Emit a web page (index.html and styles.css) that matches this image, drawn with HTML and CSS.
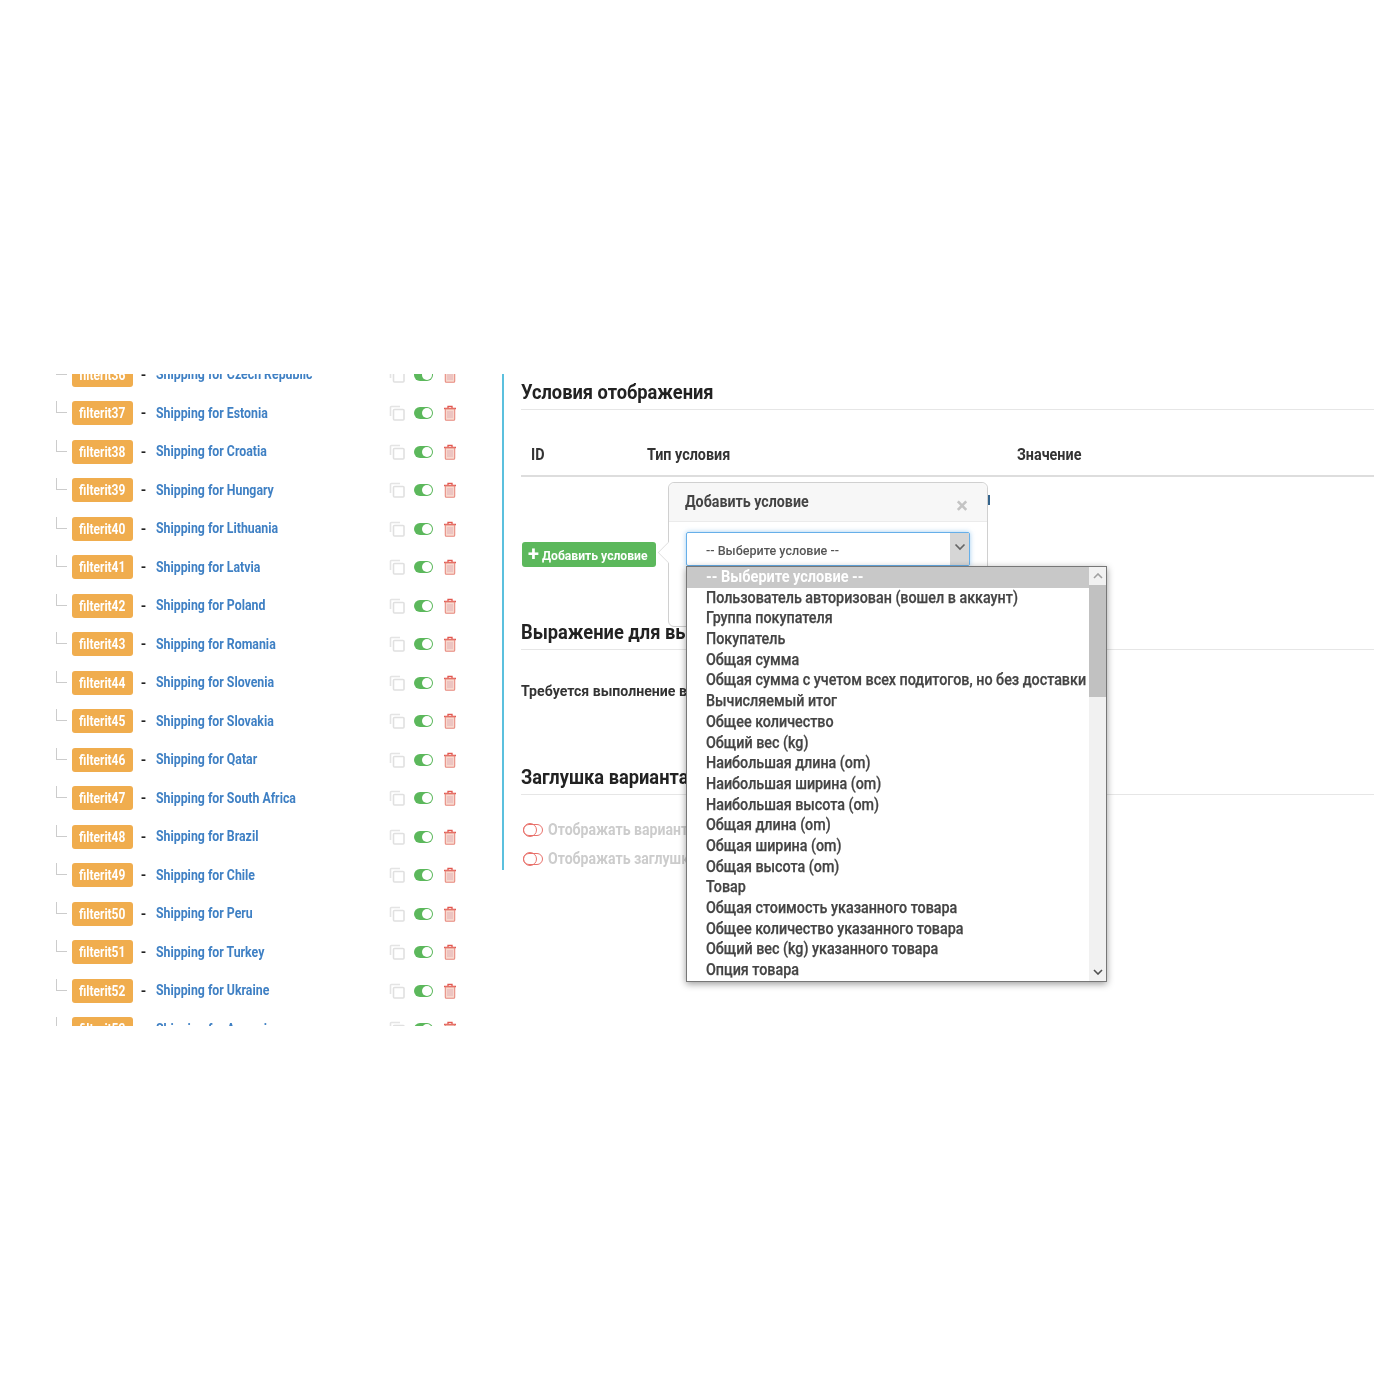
FILE: index.html
```html
<!DOCTYPE html>
<html lang="ru">
<head>
<meta charset="utf-8">
<title>Условия отображения</title>
<link rel="stylesheet" href="styles.css">
</head>
<body>
<svg class="defs" width="0" height="0" aria-hidden="true">
  <symbol id="copy" viewBox="0 0 16 16"><path d="M11 1.5H2.2a.7.7 0 0 0-.7.7V11" fill="none" stroke="#e4e4e4" stroke-width="1.6"/><rect x="4.5" y="4.5" width="10.5" height="10.5" rx="1" fill="#fff" stroke="#e0e0e0" stroke-width="1.6"/></symbol>
  <symbol id="trash" viewBox="0 0 14 16"><path d="M1 3.5h12M5 3.2V1.4h4v1.8" fill="none" stroke="#e2574f" stroke-width="1.3"/><path d="M2.3 4v10.3a1 1 0 0 0 1 1h7.4a1 1 0 0 0 1-1V4z" fill="#f7d8ce" stroke="#e88b80" stroke-width="1.1"/><path d="M5 6v7M7 6v7M9 6v7" stroke="#e3b0b4" stroke-width="1"/></symbol>
</svg>
<main class="shot">
  <section class="tree">
    <div class="row"><i class="elbow"></i><span class="badge"><span class="nar">filterit36</span></span><b class="dash">-</b><a class="link"><span class="nar">Shipping for Czech Republic</span></a><span class="acts"><svg class="ic-copy"><use href="#copy"/></svg><i class="tog"></i><svg class="ic-trash"><use href="#trash"/></svg></span></div>
    <div class="row"><i class="elbow"></i><span class="badge"><span class="nar">filterit37</span></span><b class="dash">-</b><a class="link"><span class="nar">Shipping for Estonia</span></a><span class="acts"><svg class="ic-copy"><use href="#copy"/></svg><i class="tog"></i><svg class="ic-trash"><use href="#trash"/></svg></span></div>
    <div class="row"><i class="elbow"></i><span class="badge"><span class="nar">filterit38</span></span><b class="dash">-</b><a class="link"><span class="nar">Shipping for Croatia</span></a><span class="acts"><svg class="ic-copy"><use href="#copy"/></svg><i class="tog"></i><svg class="ic-trash"><use href="#trash"/></svg></span></div>
    <div class="row"><i class="elbow"></i><span class="badge"><span class="nar">filterit39</span></span><b class="dash">-</b><a class="link"><span class="nar">Shipping for Hungary</span></a><span class="acts"><svg class="ic-copy"><use href="#copy"/></svg><i class="tog"></i><svg class="ic-trash"><use href="#trash"/></svg></span></div>
    <div class="row"><i class="elbow"></i><span class="badge"><span class="nar">filterit40</span></span><b class="dash">-</b><a class="link"><span class="nar">Shipping for Lithuania</span></a><span class="acts"><svg class="ic-copy"><use href="#copy"/></svg><i class="tog"></i><svg class="ic-trash"><use href="#trash"/></svg></span></div>
    <div class="row"><i class="elbow"></i><span class="badge"><span class="nar">filterit41</span></span><b class="dash">-</b><a class="link"><span class="nar">Shipping for Latvia</span></a><span class="acts"><svg class="ic-copy"><use href="#copy"/></svg><i class="tog"></i><svg class="ic-trash"><use href="#trash"/></svg></span></div>
    <div class="row"><i class="elbow"></i><span class="badge"><span class="nar">filterit42</span></span><b class="dash">-</b><a class="link"><span class="nar">Shipping for Poland</span></a><span class="acts"><svg class="ic-copy"><use href="#copy"/></svg><i class="tog"></i><svg class="ic-trash"><use href="#trash"/></svg></span></div>
    <div class="row"><i class="elbow"></i><span class="badge"><span class="nar">filterit43</span></span><b class="dash">-</b><a class="link"><span class="nar">Shipping for Romania</span></a><span class="acts"><svg class="ic-copy"><use href="#copy"/></svg><i class="tog"></i><svg class="ic-trash"><use href="#trash"/></svg></span></div>
    <div class="row"><i class="elbow"></i><span class="badge"><span class="nar">filterit44</span></span><b class="dash">-</b><a class="link"><span class="nar">Shipping for Slovenia</span></a><span class="acts"><svg class="ic-copy"><use href="#copy"/></svg><i class="tog"></i><svg class="ic-trash"><use href="#trash"/></svg></span></div>
    <div class="row"><i class="elbow"></i><span class="badge"><span class="nar">filterit45</span></span><b class="dash">-</b><a class="link"><span class="nar">Shipping for Slovakia</span></a><span class="acts"><svg class="ic-copy"><use href="#copy"/></svg><i class="tog"></i><svg class="ic-trash"><use href="#trash"/></svg></span></div>
    <div class="row"><i class="elbow"></i><span class="badge"><span class="nar">filterit46</span></span><b class="dash">-</b><a class="link"><span class="nar">Shipping for Qatar</span></a><span class="acts"><svg class="ic-copy"><use href="#copy"/></svg><i class="tog"></i><svg class="ic-trash"><use href="#trash"/></svg></span></div>
    <div class="row"><i class="elbow"></i><span class="badge"><span class="nar">filterit47</span></span><b class="dash">-</b><a class="link"><span class="nar">Shipping for South Africa</span></a><span class="acts"><svg class="ic-copy"><use href="#copy"/></svg><i class="tog"></i><svg class="ic-trash"><use href="#trash"/></svg></span></div>
    <div class="row"><i class="elbow"></i><span class="badge"><span class="nar">filterit48</span></span><b class="dash">-</b><a class="link"><span class="nar">Shipping for Brazil</span></a><span class="acts"><svg class="ic-copy"><use href="#copy"/></svg><i class="tog"></i><svg class="ic-trash"><use href="#trash"/></svg></span></div>
    <div class="row"><i class="elbow"></i><span class="badge"><span class="nar">filterit49</span></span><b class="dash">-</b><a class="link"><span class="nar">Shipping for Chile</span></a><span class="acts"><svg class="ic-copy"><use href="#copy"/></svg><i class="tog"></i><svg class="ic-trash"><use href="#trash"/></svg></span></div>
    <div class="row"><i class="elbow"></i><span class="badge"><span class="nar">filterit50</span></span><b class="dash">-</b><a class="link"><span class="nar">Shipping for Peru</span></a><span class="acts"><svg class="ic-copy"><use href="#copy"/></svg><i class="tog"></i><svg class="ic-trash"><use href="#trash"/></svg></span></div>
    <div class="row"><i class="elbow"></i><span class="badge"><span class="nar">filterit51</span></span><b class="dash">-</b><a class="link"><span class="nar">Shipping for Turkey</span></a><span class="acts"><svg class="ic-copy"><use href="#copy"/></svg><i class="tog"></i><svg class="ic-trash"><use href="#trash"/></svg></span></div>
    <div class="row"><i class="elbow"></i><span class="badge"><span class="nar">filterit52</span></span><b class="dash">-</b><a class="link"><span class="nar">Shipping for Ukraine</span></a><span class="acts"><svg class="ic-copy"><use href="#copy"/></svg><i class="tog"></i><svg class="ic-trash"><use href="#trash"/></svg></span></div>
    <div class="row"><i class="elbow"></i><span class="badge"><span class="nar">filterit53</span></span><b class="dash">-</b><a class="link"><span class="nar">Shipping for Armenia</span></a><span class="acts"><svg class="ic-copy"><use href="#copy"/></svg><i class="tog"></i><svg class="ic-trash"><use href="#trash"/></svg></span></div>
  </section>
  <section class="panel">
    <div class="rail">
      <h2 class="h h1"><span class="nar">Условия отображения</span></h2>
      <div class="thead"><span class="c-id"><span class="nar">ID</span></span><span class="c-type"><span class="nar">Тип условия</span></span><span><span class="nar">Значение</span></span></div>
      <div class="addrow"><button class="add"><span class="plus">+</span><span class="nar">Добавить условие</span></button></div>
      <h2 class="h h2"><span class="nar">Выражение для выбора вариантов</span></h2>
      <p class="need"><span class="nar">Требуется выполнение всех условий</span></p>
      <h2 class="h h3"><span class="nar">Заглушка варианта</span></h2>
      <div class="opts">
        <div class="opt"><i class="off"></i><span class="nar">Отображать вариант</span></div>
        <div class="opt"><i class="off"></i><span class="nar">Отображать заглушку</span></div>
      </div>
    </div>
    <div class="pop">
      <i class="pop-arrow"></i>
      <div class="pop-head"><span class="nar">Добавить условие</span><span class="close">×</span></div>
      <div class="pop-body">
        <div class="sel"><span class="nar">-- Выберите условие --</span><span class="sel-btn"><svg width="12" height="8" viewBox="0 0 12 8"><path d="M1.5 1.5 6 6l4.5-4.5" fill="none" stroke="#666" stroke-width="1.7"/></svg></span></div>
      </div>
    </div>
    <i class="pop-mark"></i>
    <div class="list">
      <ul class="items">
        <li class="on"><span class="nar">-- Выберите условие --</span></li>
        <li><span class="nar">Пользователь авторизован (вошел в аккаунт)</span></li>
        <li><span class="nar">Группа покупателя</span></li>
        <li><span class="nar">Покупатель</span></li>
        <li><span class="nar">Общая сумма</span></li>
        <li><span class="nar">Общая сумма с учетом всех подитогов, но без доставки</span></li>
        <li><span class="nar">Вычисляемый итог</span></li>
        <li><span class="nar">Общее количество</span></li>
        <li><span class="nar">Общий вес (kg)</span></li>
        <li><span class="nar">Наибольшая длина (om)</span></li>
        <li><span class="nar">Наибольшая ширина (om)</span></li>
        <li><span class="nar">Наибольшая высота (om)</span></li>
        <li><span class="nar">Общая длина (om)</span></li>
        <li><span class="nar">Общая ширина (om)</span></li>
        <li><span class="nar">Общая высота (om)</span></li>
        <li><span class="nar">Товар</span></li>
        <li><span class="nar">Общая стоимость указанного товара</span></li>
        <li><span class="nar">Общее количество указанного товара</span></li>
        <li><span class="nar">Общий вес (kg) указанного товара</span></li>
        <li><span class="nar">Опция товара</span></li>
      </ul>
      <div class="sb">
        <svg class="sb-a" viewBox="0 0 10 6"><path d="M1 5 5 1l4 4" fill="none" stroke="#a0a0a0" stroke-width="1.6"/></svg>
        <div class="thumb"></div>
        <svg class="sb-a sb-d" viewBox="0 0 10 6"><path d="M1 1l4 4 4-4" fill="none" stroke="#505050" stroke-width="1.6"/></svg>
      </div>
    </div>
  </section>
</main>
</body>
</html>
```
FILE: styles.css
```css
* { box-sizing: border-box; }
html, body { margin: 0; background: #fff; }
body { height: 1400px; font-family: Roboto, "Liberation Sans", sans-serif; color: #333; }
.defs { position: absolute; }
.shot { margin-top: 374px; height: 652px; display: flex; overflow: hidden; filter: blur(.35px); }
.nar { display: inline-block; white-space: nowrap; transform: scaleX(var(--sx, .85)); transform-origin: 0 50%; }

.tree { width: 502px; flex: none; padding: 0 0 0 56px; margin-top: -18.6px; }
.row { height: 38.53px; display: flex; align-items: center; position: relative; }
.elbow { width: 11px; height: 12px; margin: -12px 5px 0 0; border-left: 1px solid #ccc; border-bottom: 1px solid #ccc; flex: none; }
.badge { --sx: .856; width: 61px; height: 24px; flex: none; background: #f0ad4e; border-radius: 3px; color: #fff; font-size: 14px; font-weight: 700; line-height: 24px; padding-left: 7px; overflow: hidden; }
.dash { width: 21px; margin-right: 2px; flex: none; text-align: center; font-size: 14px; color: #222; }
.link { --sx: .85; color: #3f80c4; font-size: 14.5px; font-weight: 700; width: 233px; flex: none; }
.acts { display: flex; align-items: center; }
.ic-copy { width: 16px; height: 16px; }
.tog { width: 19px; height: 12px; margin-left: 9px; border-radius: 6px; background: #5cb85c; position: relative; }
.tog::after { content: ""; position: absolute; right: 1px; top: 1px; width: 10px; height: 10px; border-radius: 50%; background: #fff; }
.ic-trash { width: 14px; height: 16px; margin-left: 10px; }

.panel { flex: 1; min-width: 0; position: relative; }
.rail { width: 872px; height: 496px; border-left: 2px solid #5bc0de; padding-left: 17px; }
.h { --sx: .87; margin: 0; font-size: 21px; font-weight: 700; color: #222; border-bottom: 1px solid #e6e6e6; line-height: 24px; }
.h1 { padding-top: 6px; height: 36px; }
.thead { --sx: .87; display: flex; height: 67px; padding: 33px 0 0 10px; border-bottom: 2px solid #ddd; font-size: 16.5px; font-weight: 700; color: #333; line-height: 24px; }
.c-id { width: 116px; }
.c-type { width: 370px; }
.addrow { height: 140px; padding: 65px 0 0 1px; }
.add { --sx: .9; display: flex; align-items: center; width: 134px; height: 25px; padding: 0 0 0 6px; border: 0; border-radius: 3px; background: #5cb85c; color: #fff; font: 700 13.5px Roboto, sans-serif; overflow: hidden; }
.plus { font-size: 20px; line-height: 20px; margin-right: 3px; transform: translateY(-1px); }
.h2 { height: 33px; padding-top: 3px; }
.need { --sx: .91; margin: 0; padding-top: 30px; height: 112px; font-size: 15.5px; font-weight: 700; line-height: 22px; color: #333; }
.h3 { height: 33px; padding-top: 3px; }
.opts { --sx: .88; padding-top: 20px; }
.opt { height: 29px; display: flex; align-items: center; font-size: 16px; font-weight: 700; color: #ccc; margin-left: 2px; }
.off { width: 20px; height: 12px; margin-right: 5px; border: 1.5px solid #e8716b; border-radius: 6px; position: relative; flex: none; }
.off::after { content: ""; position: absolute; left: -1.5px; top: -1.5px; width: 12px; height: 12px; border-radius: 50%; border: 1.5px solid #e8716b; }

.pop { position: absolute; left: 166px; top: 108px; width: 320px; height: 145px; background: #fff; border: 1px solid #d0d0d0; border-radius: 6px; }
.pop-arrow { position: absolute; left: -11px; top: 59px; width: 21px; height: 21px; background: #fff; border-left: 1px solid #ddd; border-bottom: 1px solid #ddd; transform: rotate(45deg) scale(.72); }
.pop-head { --sx: .89; position: relative; height: 39px; padding: 8px 0 0 16px; background: #f7f7f7; border-bottom: 1px solid #ebebeb; border-radius: 6px 6px 0 0; font-size: 16px; font-weight: 700; color: #444; line-height: 22px; }
.close { position: absolute; right: 19px; top: 10px; font-size: 22px; font-weight: 700; line-height: 26px; color: #c4c4c4; }
.pop-body { padding: 10px 18px 10px 17px; }
.sel { --sx: .93; position: relative; width: 284px; height: 34px; border: 1px solid #66afe9; border-radius: 2px; box-shadow: 0 0 5px rgba(102,175,233,.6); padding-left: 19px; font-size: 13.5px; font-weight: 500; color: #555; line-height: 34px; }
.sel-btn { position: absolute; right: 0; top: 0; bottom: 0; width: 19px; background: #d6d6d6; display: flex; align-items: center; justify-content: center; padding-bottom: 4px; }
.pop-mark { position: absolute; left: 486px; top: 121px; width: 1.5px; height: 10px; background: #34648c; }

.list { --sx: .895; position: absolute; left: 184px; top: 192px; width: 421px; height: 416px; background: #fff; border: 1px solid #777; box-shadow: 0 2px 7px rgba(0,0,0,.4); display: flex; overflow: hidden; }
.items { flex: 1; min-width: 0; margin: 0; padding: 0; list-style: none; font-size: 16px; font-weight: 500; color: #444; -webkit-text-stroke: .25px #444; }
.items li { height: 20.7px; line-height: 20.7px; padding-left: 19px; overflow: hidden; }
.items .on { --sx: .906; background: #c8c8c8; color: #fff; font-weight: 700; -webkit-text-stroke: 0; }
.sb { width: 17px; flex: none; background: #f1f1f1; display: flex; flex-direction: column; align-items: center; }
.sb-a { width: 10px; height: 6px; margin: 6px 0; flex: none; }
.thumb { width: 17px; height: 112px; background: #c1c1c1; }
.sb-d { margin-top: auto; }
```
